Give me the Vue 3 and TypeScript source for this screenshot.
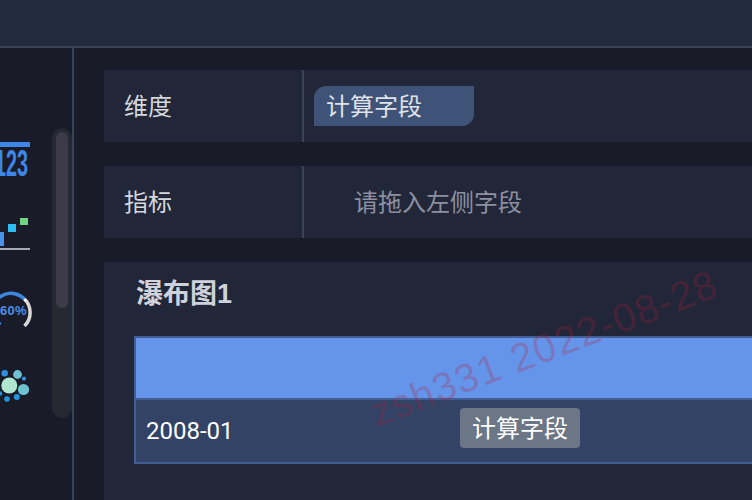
<script setup lang="ts">
const dots = [
  { cx: 9.3, cy: 385.5, r: 8, fill: "#b0e6cf" },
  { cx: 23.5, cy: 389.5, r: 5.6, fill: "#6fc3d0" },
  { cx: 17.5, cy: 374.5, r: 4.4, fill: "#6fc3d0" },
  { cx: 4.7, cy: 373.3, r: 3.3, fill: "#2f8fdc" },
  { cx: 24, cy: 378.7, r: 2.1, fill: "#2f8fdc" },
  { cx: 16.8, cy: 397, r: 3, fill: "#2196dc" },
  { cx: 7, cy: 399, r: 2.8, fill: "#2196dc" },
  { cx: 0, cy: 393.5, r: 2.2, fill: "#2196dc" },
];
</script>

<template>
  <div class="page">
    <header class="topbar"></header>
    <div class="body">
      <aside class="sidebar">
        <svg class="side-icons" width="52" height="452" viewBox="0 48 52 452">
          <rect x="0" y="142" width="30" height="5" fill="#3d87e8" />
          <text class="num" transform="translate(-5 176) scale(0.55 1)">123</text>

          <rect x="0" y="232" width="4" height="14" fill="#4a90e8" />
          <rect x="8" y="224" width="8" height="8" fill="#2fbdf0" />
          <rect x="20" y="218" width="8" height="7" fill="#6fd67e" />
          <rect x="0" y="248" width="30" height="2" fill="#a8a9b2" />

          <path d="M-8 312.5 A19 19 0 0 1 24.5 299" fill="none" stroke="#3d87e0" stroke-width="3.5" />
          <path d="M24.5 299 A19 19 0 0 1 24.5 326" fill="none" stroke="#d8d8d8" stroke-width="3.5" />
          <circle cx="25" cy="300" r="1.3" fill="#ffffff" />
          <circle cx="0" cy="323.5" r="1.2" fill="#3d87e0" />
          <text class="pct" x="0" y="315">60%</text>

          <circle v-for="(d, i) in dots" :key="i" :cx="d.cx" :cy="d.cy" :r="d.r" :fill="d.fill" />
        </svg>
        <div class="scroll-track">
          <div class="scroll-thumb"></div>
        </div>
      </aside>
      <main class="main">
        <section class="row">
          <div class="row-label">维度</div>
          <div class="row-value">
            <span class="pill">计算字段</span>
          </div>
        </section>
        <section class="row">
          <div class="row-label">指标</div>
          <div class="row-value">
            <span class="placeholder">请拖入左侧字段</span>
          </div>
        </section>
        <section class="panel">
          <h2 class="panel-title">瀑布图1</h2>
          <div class="table">
            <div class="table-head"></div>
            <div class="table-row">
              <div class="cell-date">2008-01</div>
              <div class="cell-chip"><span class="chip">计算字段</span></div>
            </div>
          </div>
        </section>
      </main>
    </div>
    <div class="watermark">zsh331 2022-08-28</div>
  </div>
</template>

<style>
html,
body {
  margin: 0;
  overflow: hidden;
  background: #191b28;
}
</style>

<style scoped>
.page {
  position: relative;
  width: 752px;
  height: 500px;
  overflow: hidden;
  display: flex;
  flex-direction: column;
  background: #191b28;
  font-family: "Liberation Sans", "Noto Sans CJK SC", sans-serif;
}

.topbar {
  height: 46px;
  flex: none;
  background: #222a3e;
  border-bottom: 2px solid #3a4258;
}

.body {
  flex: 1;
  min-height: 0;
  display: flex;
}

.sidebar {
  width: 72px;
  flex: none;
  display: flex;
  border-right: 2px solid #3a4258;
}

.side-icons {
  flex: none;
  display: block;
}

.num {
  font-family: "Liberation Sans", sans-serif;
  font-size: 36px;
  font-weight: 700;
  fill: #3d87e8;
}

.pct {
  font-family: "Liberation Sans", sans-serif;
  font-size: 13px;
  font-weight: 700;
  letter-spacing: 0.3px;
  fill: #4a8fe6;
}

.scroll-track {
  width: 20px;
  height: 290px;
  margin-top: 80px;
  padding: 4px;
  box-sizing: border-box;
  border-radius: 10px;
  background: #262832;
}

.scroll-thumb {
  height: 176px;
  border-radius: 6px;
  background: #3b3c48;
}

.main {
  flex: 1;
  min-width: 0;
  padding: 22px 0 0 30px;
  display: flex;
  flex-direction: column;
  gap: 24px;
}

.row {
  height: 72px;
  flex: none;
  display: flex;
  background: #212638;
}

.row-label {
  width: 198px;
  flex: none;
  padding: 0 0 4px 20px;
  box-sizing: border-box;
  display: flex;
  align-items: center;
  font-size: 24px;
  color: #d5d8dc;
}

.row-value {
  flex: 1;
  border-left: 2px solid #3a4258;
  padding-left: 10px;
  display: flex;
  align-items: center;
}

.pill {
  width: 160px;
  height: 40px;
  padding-left: 12px;
  box-sizing: border-box;
  border-radius: 12px 0 12px 0;
  background: #3f5379;
  font-size: 24px;
  line-height: 41px;
  color: #dfe2e6;
}

.placeholder {
  padding: 0 0 4px 40px;
  font-size: 24px;
  color: #8c90a0;
}

.panel {
  flex: 1;
  min-height: 0;
  padding-left: 30px;
  background: #212638;
}

.panel-title {
  margin: 0 0 0 2px;
  height: 74px;
  font-size: 27px;
  font-weight: 700;
  line-height: 64px;
  color: #cfd2db;
}

.table {
  border: 2px solid #435f96;
  border-right: 0;
}

.table-head {
  height: 60px;
  background: #6595ea;
  border-bottom: 2px solid #435f96;
}

.table-row {
  height: 62px;
  display: flex;
  align-items: center;
  background: #324365;
}

.cell-date {
  width: 312px;
  flex: none;
  padding-left: 10px;
  box-sizing: border-box;
  font-family: Roboto, "Liberation Sans", sans-serif;
  font-size: 24px;
  color: #ffffff;
}

.cell-chip {
  padding: 0 0 6px 12px;
}

.chip {
  display: block;
  width: 120px;
  height: 40px;
  border-radius: 4px;
  background: #6b7686;
  font-size: 24px;
  line-height: 42px;
  text-align: center;
  color: #ffffff;
}

.watermark {
  position: absolute;
  left: 372px;
  top: 392px;
  transform: rotate(-21deg);
  transform-origin: left center;
  font-size: 40px;
  letter-spacing: 1.4px;
  white-space: nowrap;
  color: rgba(180, 30, 60, 0.27);
  pointer-events: none;
}
</style>
